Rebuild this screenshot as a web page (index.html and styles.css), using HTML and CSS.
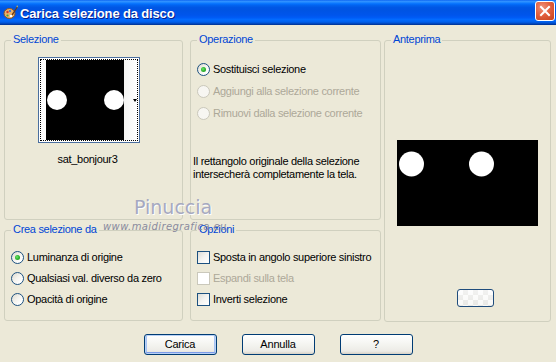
FILE: index.html
```html
<!DOCTYPE html>
<html>
<head>
<meta charset="utf-8">
<title>Carica selezione da disco</title>
<link rel="stylesheet" href="styles.css">
</head>
<body>
<div class="window">
  <div class="titlebar">
    <svg class="appicon" width="15" height="15" viewBox="0 0 15 15">
      <ellipse cx="6.5" cy="8.5" rx="5.5" ry="5" fill="#E9B16A" stroke="#8A5422" stroke-width="1"/>
      <circle cx="4.5" cy="7" r="1.2" fill="#D23A2A"/>
      <circle cx="7" cy="6" r="1.1" fill="#2B6FD6"/>
      <circle cx="4.5" cy="10.5" r="1.1" fill="#3DA83D"/>
      <circle cx="8" cy="11" r="1.3" fill="#fff"/>
      <path d="M8.5 9.5 L14 1.5 L14.8 2.3 L9.6 10.4 Z" fill="#6B3B16"/>
      <path d="M13.2 1 L14.8 0.6 L14.6 2.4 Z" fill="#F2D23A"/>
    </svg>
    <span class="title">Carica selezione da disco</span>
    <div class="close">
      <svg width="20" height="20" viewBox="0 0 20 20"><path d="M6 6 L14 14 M14 6 L6 14" stroke="#fff" stroke-width="2" stroke-linecap="square"/></svg>
    </div>
  </div>

  <div class="content">
    <div class="groups">
      <section class="group g-sel">
        <div class="legend">Selezione</div>
        <div class="thumb">
          <div class="focus">
            <div class="pad-left"></div>
            <svg class="thumb-img" width="78" height="80" viewBox="0 0 78 80">
              <rect width="78" height="80" fill="#000"/>
              <circle cx="11" cy="40" r="10" fill="#fff"/>
              <circle cx="68" cy="40" r="10" fill="#fff"/>
            </svg>
            <div class="pad-right"><span class="arrow"></span></div>
          </div>
        </div>
        <div class="caption">sat_bonjour3</div>
      </section>

      <section class="group g-op">
        <div class="legend">Operazione</div>
        <div class="options op-list">
          <div class="opt"><span class="radio checked"></span>Sostituisci selezione</div>
          <div class="opt disabled"><span class="radio"></span>Aggiungi alla selezione corrente</div>
          <div class="opt disabled"><span class="radio"></span>Rimuovi dalla selezione corrente</div>
        </div>
        <p class="note">Il rettangolo originale della selezione<br>intersecherà completamente la tela.</p>
      </section>

      <section class="group g-prev">
        <div class="legend">Anteprima</div>
        <svg class="preview" width="141" height="86" viewBox="0 0 141 86">
          <rect width="141" height="86" fill="#000"/>
          <circle cx="14.5" cy="24" r="12.5" fill="#fff"/>
          <circle cx="84.5" cy="24" r="12.5" fill="#fff"/>
        </svg>
        <div class="bgbtn"></div>
      </section>

      <section class="group g-crea">
        <div class="legend">Crea selezione da</div>
        <div class="options small-list">
          <div class="opt row21"><span class="radio checked"></span>Luminanza di origine</div>
          <div class="opt row21"><span class="radio"></span>Qualsiasi val. diverso da zero</div>
          <div class="opt row21"><span class="radio"></span>Opacità di origine</div>
        </div>
      </section>

      <section class="group g-opz">
        <div class="legend">Opzioni</div>
        <div class="options small-list">
          <div class="opt row21"><span class="check"></span>Sposta in angolo superiore sinistro</div>
          <div class="opt row21 disabled"><span class="check"></span>Espandi sulla tela</div>
          <div class="opt row21"><span class="check"></span>Inverti selezione</div>
        </div>
      </section>
    </div>

    <div class="buttons">
      <button class="btn default">Carica</button>
      <button class="btn">Annulla</button>
      <button class="btn">?</button>
    </div>
  </div>

  <div class="watermark">
    <div class="wm-name">Pinuccia</div>
    <div class="wm-url">www.maidiregrafica.eu</div>
  </div>
</div>
</body>
</html>
```

FILE: styles.css
```css
html, body {
  margin: 0;
  padding: 0;
  background: #ECE9D8;
}

body {
  font-family: "Liberation Sans", Arial, sans-serif;
  font-size: 11px;
  line-height: 13px;
  letter-spacing: -0.3px;
  color: #000;
}

.window {
  position: relative;
  width: 556px;
  height: 362px;
  overflow: hidden;
  background: #ECE9D8;
}

/* ---------- title bar ---------- */
.titlebar {
  height: 25px;
  display: flex;
  align-items: center;
  padding-left: 3px;
  background: linear-gradient(to bottom,
    #0058EE 0%, #3593FF 4%, #288EFF 8%, #127DFF 12%, #036FFC 16%,
    #0262EE 22%, #0057E5 30%, #0054E3 40%, #0055EB 60%, #005BF5 70%,
    #026AFE 78%, #0062EF 86%, #0052D6 92%, #0040AB 96%, #003092 100%);
}

.appicon {
  flex: none;
  margin-right: 2px;
}

.title {
  flex: 1;
  color: #fff;
  font-weight: bold;
  font-size: 13px;
  letter-spacing: -0.15px;
  text-shadow: 1px 1px 0 #0A1E88;
  padding-top: 1px;
}

.close {
  flex: none;
  align-self: flex-start;
  margin-top: 1px;
  margin-right: 1px;
  width: 20px;
  height: 20px;
  box-sizing: border-box;
  border: 1px solid #fff;
  border-radius: 3px;
  background: radial-gradient(circle at 35% 30%, #F0917A 0%, #E2603F 45%, #C6411C 100%);
  display: flex;
  align-items: center;
  justify-content: center;
}

.close svg {
  display: block;
  margin: -1px;
}

/* ---------- groups ---------- */
.groups {
  display: grid;
  grid-template-columns: 179px 191px 167px;
  grid-template-rows: 180px 91px;
  column-gap: 7px;
  row-gap: 10px;
  padding: 15px 0 0 4px;
}

.group {
  box-sizing: border-box;
  border: 1px solid #D0D0BF;
  border-radius: 3px;
  min-width: 0;
}

.legend {
  width: fit-content;
  margin: -8px 0 0 6px;
  padding: 0 2px;
  background: #ECE9D8;
  color: #0046D5;
  line-height: 13px;
}

.g-sel { grid-column: 1; grid-row: 1; }
.g-op { grid-column: 2; grid-row: 1; }
.g-prev {
  grid-column: 3;
  grid-row: 1 / 3;
  width: 167px;
  height: 282px;
  margin-left: -4px;
}
.g-crea { grid-column: 1; grid-row: 2; }
.g-opz { grid-column: 2; grid-row: 2; }

/* selection thumbnail */
.thumb {
  width: 102px;
  height: 86px;
  box-sizing: border-box;
  margin: 11px 0 0 33px;
  border: 1px solid #4A6E9E;
  background: #fff;
  padding: 1px;
}

.focus {
  box-sizing: border-box;
  height: 100%;
  border: 1px dotted #000;
  display: flex;
}

.pad-left {
  width: 5px;
  flex: none;
  background: #fff;
}

.thumb-img {
  display: block;
  flex: none;
}

.pad-right {
  flex: 1;
  display: flex;
  align-items: center;
  justify-content: flex-end;
  background: linear-gradient(to right, #F4F4F2, #FFFFFF);
}

.arrow {
  width: 0;
  height: 0;
  border-left: 2.5px solid transparent;
  border-right: 2.5px solid transparent;
  border-top: 3px solid #000;
}

.caption {
  margin-top: 10px;
  text-align: center;
  padding-right: 12px;
}

/* radio / checkbox options */
.options {
  display: flex;
  flex-direction: column;
}

.op-list {
  margin: 12px 0 0 6px;
}

.small-list {
  margin: 11px 0 0 6px;
}

.opt {
  height: 22px;
  display: flex;
  align-items: center;
  white-space: nowrap;
}

.opt.row21 {
  height: 21px;
}

.opt.disabled {
  color: #ACA899;
}

.radio {
  flex: none;
  position: relative;
  width: 13px;
  height: 13px;
  box-sizing: border-box;
  border-radius: 50%;
  border: 1px solid #1C5180;
  background: linear-gradient(135deg, #DCD9CD 0%, #F4F3EE 45%, #FFFFFF 80%);
  margin-right: 3px;
}

.radio.checked::after {
  content: "";
  position: absolute;
  left: 3px;
  top: 3px;
  width: 5px;
  height: 5px;
  border-radius: 50%;
  background: radial-gradient(circle at 40% 40%, #6BE86B 0%, #2FB32F 50%, #1E8E1E 100%);
}

.disabled .radio {
  border-color: #CAC8BB;
  background: #F7F6F2;
}

.check {
  flex: none;
  width: 13px;
  height: 13px;
  box-sizing: border-box;
  border: 1px solid #1C5180;
  background: linear-gradient(135deg, #DCDCD7 0%, #F4F4F1 50%, #FFFFFF 100%);
  margin-right: 3px;
}

.disabled .check {
  border-color: #CAC8BB;
  background: #FFFFFF;
}

.note {
  margin: 31px 0 0 2px;
  line-height: 13px;
}

/* preview */
.preview {
  display: block;
  margin: 94px 0 0 12px;
}

.bgbtn {
  width: 37px;
  height: 18px;
  box-sizing: border-box;
  margin: 63px 0 0 72px;
  border: 1px solid #1F4C7C;
  border-radius: 3px;
  background:
    linear-gradient(rgba(255,255,255,0.55), rgba(245,245,240,0.35)),
    repeating-conic-gradient(#E2E2E0 0 25%, #FBFBFB 0 50%) 0 0 / 10px 10px;
}

/* ---------- buttons ---------- */
.buttons {
  display: flex;
  justify-content: center;
  gap: 25px;
  margin-top: 13px;
}

.btn {
  width: 73px;
  height: 21px;
  box-sizing: border-box;
  padding: 0;
  border: 1px solid #003C74;
  border-radius: 3px;
  background: linear-gradient(to bottom, #FFFFFF 0%, #F4F4F0 50%, #ECEBE6 85%, #D6D0C5 100%);
  font-family: inherit;
  font-size: 11px;
  letter-spacing: -0.2px;
  color: #000;
  line-height: 13px;
}

.btn.default {
  box-shadow: inset 0 0 0 1px #B9D1F5, inset 0 -2px 0 0 #7C9BE8, inset 2px 0 0 0 #A8C4F3, inset -2px 0 0 0 #A8C4F3;
}

/* ---------- watermark overlay ---------- */
.watermark {
  position: absolute;
  left: 103px;
  top: 197px;
  width: 140px;
  pointer-events: none;
}

.wm-name {
  font-family: "DejaVu Sans", sans-serif;
  font-size: 19px;
  line-height: 20px;
  letter-spacing: 0;
  color: #A6A9C0;
  text-shadow: 1px 1px 0 #FFFFFF;
  margin-left: 31px;
}

.wm-url {
  font-family: "DejaVu Sans", sans-serif;
  font-style: italic;
  font-size: 10px;
  line-height: 12px;
  letter-spacing: 0.4px;
  color: #8A8B9E;
  margin-top: 4px;
}
```
